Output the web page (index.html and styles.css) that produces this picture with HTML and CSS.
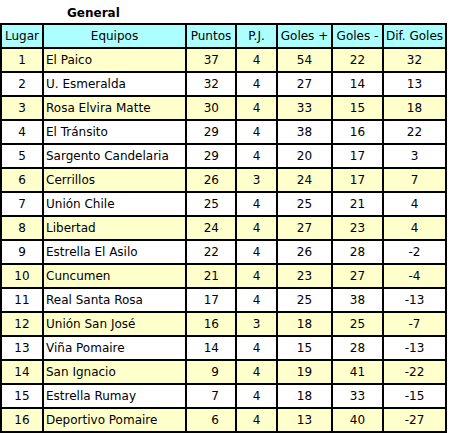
FILE: index.html
```html
<!DOCTYPE html>
<html>
<head>
<meta charset="utf-8">
<link rel="stylesheet" href="styles.css">
</head>
<body>
<div class="title">General</div>
<table class="standings">
<thead>
<tr>
<th class="c-pos">Lugar</th>
<th class="c-team">Equipos</th>
<th class="c-pts">Puntos</th>
<th class="c-pj">P.J.</th>
<th class="c-gf">Goles +</th>
<th class="c-gc">Goles -</th>
<th class="c-dif">Dif. Goles</th>
</tr>
</thead>
<tbody>
<tr class="odd"><td>1</td><td class="team">El Paico</td><td class="pts">37</td><td>4</td><td>54</td><td>22</td><td>32</td></tr>
<tr><td>2</td><td class="team">U. Esmeralda</td><td class="pts">32</td><td>4</td><td>27</td><td>14</td><td>13</td></tr>
<tr class="odd"><td>3</td><td class="team">Rosa Elvira Matte</td><td class="pts">30</td><td>4</td><td>33</td><td>15</td><td>18</td></tr>
<tr><td>4</td><td class="team">El Tránsito</td><td class="pts">29</td><td>4</td><td>38</td><td>16</td><td>22</td></tr>
<tr><td>5</td><td class="team">Sargento Candelaria</td><td class="pts">29</td><td>4</td><td>20</td><td>17</td><td>3</td></tr>
<tr class="odd"><td>6</td><td class="team">Cerrillos</td><td class="pts">26</td><td>3</td><td>24</td><td>17</td><td>7</td></tr>
<tr><td>7</td><td class="team">Unión Chile</td><td class="pts">25</td><td>4</td><td>25</td><td>21</td><td>4</td></tr>
<tr class="odd"><td>8</td><td class="team">Libertad</td><td class="pts">24</td><td>4</td><td>27</td><td>23</td><td>4</td></tr>
<tr><td>9</td><td class="team">Estrella El Asilo</td><td class="pts">22</td><td>4</td><td>26</td><td>28</td><td>-2</td></tr>
<tr class="odd"><td>10</td><td class="team">Cuncumen</td><td class="pts">21</td><td>4</td><td>23</td><td>27</td><td>-4</td></tr>
<tr><td>11</td><td class="team">Real Santa Rosa</td><td class="pts">17</td><td>4</td><td>25</td><td>38</td><td>-13</td></tr>
<tr class="odd"><td>12</td><td class="team">Unión San José</td><td class="pts">16</td><td>3</td><td>18</td><td>25</td><td>-7</td></tr>
<tr><td>13</td><td class="team">Viña Pomaire</td><td class="pts">14</td><td>4</td><td>15</td><td>28</td><td>-13</td></tr>
<tr class="odd"><td>14</td><td class="team">San Ignacio</td><td class="pts">9</td><td>4</td><td>19</td><td>41</td><td>-22</td></tr>
<tr><td>15</td><td class="team">Estrella Rumay</td><td class="pts">7</td><td>4</td><td>18</td><td>33</td><td>-15</td></tr>
<tr class="odd"><td>16</td><td class="team">Deportivo Pomaire</td><td class="pts">6</td><td>4</td><td>13</td><td>40</td><td>-27</td></tr>
</tbody>
</table>
</body>
</html>
```
FILE: styles.css
```css
html, body {
  margin: 0;
  padding: 0;
  background: #ffffff;
}
body {
  font-family: "DejaVu Sans", Verdana, sans-serif;
  font-size: 12px;
  color: #000000;
}
.title {
  height: 23px;
  line-height: 26px;
  padding-left: 67px;
  font-weight: bold;
  font-size: 12px;
  box-sizing: border-box;
}
.standings {
  border-collapse: separate;
  border-spacing: 0;
  border: 1px solid #000;
  table-layout: fixed;
  width: 447px;
}
.standings th,
.standings td {
  border: 1px solid #000;
  height: 24px;
  box-sizing: border-box;
  padding: 0;
  text-align: center;
  white-space: nowrap;
  overflow: hidden;
  font-weight: normal;
}
.standings th {
  background: #adffff;
}
.standings tr.odd td {
  background: #ffffcc;
}
.standings td.team {
  text-align: left;
  padding-left: 2px;
}
.standings td.pts {
  text-align: right;
  padding-right: 16px;
}
.c-pos { width: 42px; }
.c-team { width: 143px; }
.c-pts { width: 50px; }
.c-pj { width: 41px; }
.c-gf { width: 55px; }
.c-gc { width: 51px; }
.c-dif { width: 63px; }
```
